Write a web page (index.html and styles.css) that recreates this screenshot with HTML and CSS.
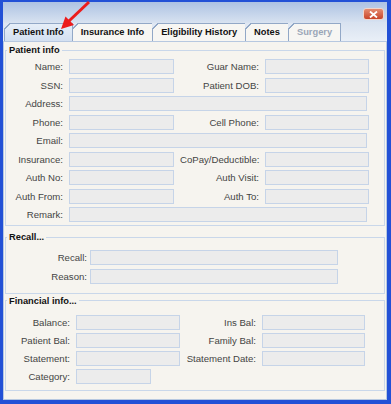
FILE: index.html
```html
<!DOCTYPE html>
<html lang="en">
<head>
    <meta charset="UTF-8">
    <meta name="viewport" content="width=device-width, initial-scale=1.0">
    <title>Patient Info</title>
    <link rel="stylesheet" href="styles.css">
</head>
<body>
    <div class="window">
        <div class="titlebar">
            <span class="close">
                <svg width="9" height="7" viewBox="0 0 9 7"><path d="M1 0.5 L8 6.5 M8 0.5 L1 6.5" stroke="#fff" stroke-width="1.8"/></svg>
            </span>
        </div>

        <div class="tabs">
            <span class="tab active">Patient Info</span>
            <span class="tab">Insurance Info</span>
            <span class="tab">Eligibility History</span>
            <span class="tab">Notes</span>
            <span class="tab disabled">Surgery</span>
        </div>

        <div class="panel">
            <fieldset class="group patient">
                <legend>Patient info</legend>
                <div class="grid">
                    <label>Name:</label><input class="field" type="text" disabled>
                    <label>Guar Name:</label><input class="field" type="text" disabled>

                    <label>SSN:</label><input class="field" type="text" disabled>
                    <label>Patient DOB:</label><input class="field" type="text" disabled>

                    <label>Address:</label><input class="field wide" type="text" disabled>

                    <label>Phone:</label><input class="field" type="text" disabled>
                    <label>Cell Phone:</label><input class="field" type="text" disabled>

                    <label>Email:</label><input class="field wide" type="text" disabled>

                    <label>Insurance:</label><input class="field" type="text" disabled>
                    <label>CoPay/Deductible:</label><input class="field" type="text" disabled>

                    <label>Auth No:</label><input class="field" type="text" disabled>
                    <label>Auth Visit:</label><input class="field" type="text" disabled>

                    <label>Auth From:</label><input class="field" type="text" disabled>
                    <label>Auth To:</label><input class="field" type="text" disabled>

                    <label>Remark:</label><input class="field wide" type="text" disabled>
                </div>
            </fieldset>

            <fieldset class="group recall">
                <legend>Recall...</legend>
                <div class="grid">
                    <label>Recall:</label><input class="field" type="text" disabled>
                    <label>Reason:</label><input class="field" type="text" disabled>
                </div>
            </fieldset>

            <fieldset class="group financial">
                <legend>Financial info...</legend>
                <div class="grid">
                    <label>Balance:</label><input class="field" type="text" disabled>
                    <label>Ins Bal:</label><input class="field" type="text" disabled>

                    <label>Patient Bal:</label><input class="field" type="text" disabled>
                    <label>Family Bal:</label><input class="field" type="text" disabled>

                    <label>Statement:</label><input class="field" type="text" disabled>
                    <label>Statement Date:</label><input class="field" type="text" disabled>

                    <label>Category:</label><input class="field short" type="text" disabled>
                </div>
            </fieldset>
        </div>

        <!-- red pointer drawn over the first tab -->
        <svg class="arrow" width="100" height="40" viewBox="0 0 100 40">
            <line x1="89" y1="2" x2="69" y2="21" stroke="#ec1c1c" stroke-width="3"/>
            <polygon points="61,29 65.5,16.5 74,25" fill="#ec1c1c"/>
        </svg>
    </div>
</body>
</html>
```

FILE: styles.css
```css
body {
    margin: 0;
    font-family: 'Liberation Sans', Arial, sans-serif;
    background-color: #ffffff;
}

.window {
    position: relative;
    width: 391px;
    height: 404px;
    box-sizing: border-box;
    padding: 2px 4px 4px 3px;
    background-color: #2250d6;
    display: flex;
    flex-direction: column;
}

.titlebar {
    height: 20px;
    background: linear-gradient(#adc2e3, #d6e1f0);
    display: flex;
    justify-content: flex-end;
    align-items: flex-start;
    padding-right: 3px;
}

.close {
    margin-top: 6px;
    width: 21px;
    height: 12px;
    box-sizing: border-box;
    border: 1px solid #f2d6cc;
    border-radius: 3px;
    background: linear-gradient(#e58b6f, #c8452a);
    display: flex;
    align-items: center;
    justify-content: center;
}

.tabs {
    height: 19px;
    background: linear-gradient(#d8e2f0, #e9eff7);
    display: flex;
    align-items: flex-end;
    padding-left: 1px;
}

.tab {
    position: relative;
    height: 18px;
    box-sizing: border-box;
    padding: 0 8px 0 8px;
    margin-right: -1px;
    border: 1px solid #92a8c7;
    border-bottom: none;
    background-color: #f7f6f3;
    font-size: 9.3px;
    font-weight: bold;
    line-height: 17px;
    color: #111;
}

.tab::before {
    content: '';
    position: absolute;
    left: -1px;
    top: -1px;
    width: 6px;
    height: 6px;
    background: linear-gradient(135deg, #dfe7f3 0 45%, #92a8c7 45% 60%, transparent 60%);
}

.tab.active {
    background: linear-gradient(#e6eef8, #d3e0f1);
    z-index: 1;
}

.tab.disabled {
    color: #9ba6b8;
}

.panel {
    flex: 1;
    background-color: #f6f4ef;
    border: 1px solid #b7c8e0;
    padding-top: 2px;
}

.group {
    margin: 0 1px;
    padding: 3px 0 3px 0;
    border: 1px solid #c9d7ea;
    min-width: 0;
}

.group legend {
    margin-left: 1px;
    padding: 0 2px;
    font-size: 9.3px;
    font-weight: bold;
    line-height: 12px;
    color: #111;
}

.grid {
    display: grid;
    column-gap: 6px;
    row-gap: 3.5px;
    grid-auto-rows: 15px;
}

.grid label {
    text-align: right;
    font-size: 9.6px;
    line-height: 15px;
    color: #444;
    white-space: nowrap;
}

.field {
    margin: 0;
    padding: 0;
    width: 100%;
    height: 15px;
    box-sizing: border-box;
    border: 1px solid #c6d4e8;
    background-color: #ececec;
}

.field.wide {
    grid-column: 2 / 5;
    width: auto;
    margin-right: 2px;
}

.field.short {
    width: 75px;
}

.patient .grid {
    grid-template-columns: 57px 105px 79px 104px;
}

.recall {
    margin-top: 5px;
    padding: 7px 0 9px 0;
}

.recall .grid {
    grid-template-columns: 81px 248px;
    column-gap: 3px;
}

.financial {
    margin-top: 1px;
    padding: 8px 0 6px 0;
}

.financial .grid {
    grid-template-columns: 64px 104px 70px 103px;
    row-gap: 3.3px;
}

.arrow {
    position: absolute;
    left: 0;
    top: 0;
    z-index: 2;
}
```
